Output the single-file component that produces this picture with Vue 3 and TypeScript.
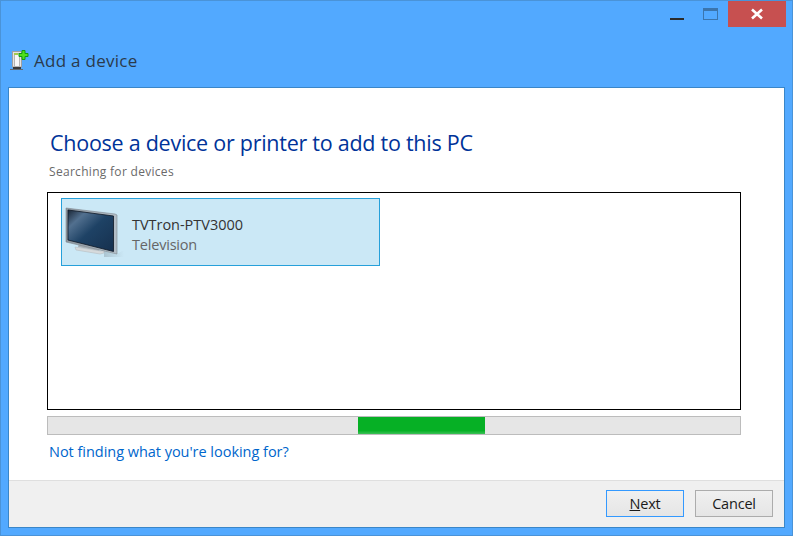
<script setup lang="ts">
const device = { name: 'TVTron-PTV3000', kind: 'Television' }
</script>

<template>
  <div class="window">
    <div class="controls">
      <div class="min-btn"><span class="min-bar"></span></div>
      <div class="max-btn"><span class="max-box"></span></div>
      <div class="close-btn">
        <svg width="14" height="12" viewBox="0 0 14 12">
          <path d="M2 1.500 L12 10.500 M12 1.500 L2 10.500" stroke="#fff" stroke-width="2.6" fill="none" />
        </svg>
      </div>
    </div>
    <div class="title-row">
      <svg class="app-icon" width="20" height="21" viewBox="0 0 20 21">
        <rect x="3.500" y="2.500" width="9" height="15.500" fill="#e4e4e4" stroke="#a0a0a0" />
        <rect x="5.500" y="4.500" width="5" height="13" fill="#f8f8f8" stroke="#b4b4b4" />
        <rect x="5" y="4" width="4" height="2" fill="#a4c850" />
        <rect x="4" y="18" width="8" height="2" fill="#3a3a3a" />
        <rect x="1" y="20" width="13" height="1" fill="#5f6a75" />
        <path d="M13 1.500 H16 V4.500 H19 V7.500 H16 V10.500 H13 V7.500 H10 V4.500 H13 Z" fill="#4fe01c" stroke="#129a10" stroke-width="1" />
      </svg>
      <span class="title">Add a device</span>
    </div>
    <main class="panel">
      <div class="content">
        <h1 class="heading">Choose a device or printer to add to this PC</h1>
        <p class="status">Searching for devices</p>
        <div class="list">
          <div class="item">
            <svg class="tv" width="68" height="56" viewBox="0 0 68 56">
              <defs>
                <linearGradient id="scr" x1="0" y1="0" x2="1" y2="1">
                  <stop offset="0" stop-color="#1a2636" />
                  <stop offset="0.22" stop-color="#52708f" />
                  <stop offset="0.5" stop-color="#1e4265" />
                  <stop offset="1" stop-color="#16304e" />
                </linearGradient>
                <linearGradient id="frm" x1="0" y1="0" x2="1" y2="0">
                  <stop offset="0" stop-color="#8b949c" />
                  <stop offset="1" stop-color="#b4bfc8" />
                </linearGradient>
                <linearGradient id="shd" x1="0" y1="0" x2="1" y2="0">
                  <stop offset="0" stop-color="#9fb6c2" stop-opacity="0.7" />
                  <stop offset="1" stop-color="#9fb6c2" stop-opacity="0" />
                </linearGradient>
              </defs>
              <path d="M40 47 L53 50 L60 46 L60 53 L40 53 Z" fill="url(#shd)" />
              <path d="M15 39 L14 43 L35 47 L36 43 Z" fill="#a9b0b5" />
              <path d="M11 43 L37 47 L40 46.500 L40 49 L36 50 L12 46 Z" fill="#d6dadc" stroke="#b0b6ba" stroke-width="0.500" />
              <path d="M2 4 L51 10 L53 11 L53 50 L51 49.500 L2 38 Z" fill="url(#frm)" stroke="#7d878f" stroke-width="0.600" />
              <path d="M4 6 L49.500 12 L49.500 47.500 L4 36 Z" fill="url(#scr)" stroke="#0e1826" stroke-width="0.800" />
            </svg>
            <div class="item-text">
              <div class="item-name">{{ device.name }}</div>
              <div class="item-kind">{{ device.kind }}</div>
            </div>
          </div>
        </div>
        <div class="progress"><div class="progress-fill"></div></div>
        <div class="link">Not finding what you're looking for?</div>
      </div>
      <footer class="footer">
        <button class="btn btn-default" type="button"><u>N</u>ext</button>
        <button class="btn" type="button">Cancel</button>
      </footer>
    </main>
  </div>
</template>

<style>
html, body { margin: 0; padding: 0; }
</style>

<style scoped>
.window {
  box-sizing: border-box;
  width: 793px;
  height: 536px;
  background: #52a9ff;
  border: 1px solid #4a93d8;
  padding: 0 7px 7px;
  display: flex;
  flex-direction: column;
  font-family: "Open Sans", "Noto Sans", sans-serif;
  overflow: hidden;
}
.controls {
  height: 26px;
  display: flex;
  justify-content: flex-end;
  margin-right: -1px;
  flex: none;
}
.min-btn { width: 14px; margin-right: 19px; display: flex; align-items: flex-end; padding-bottom: 7px; box-sizing: border-box; }
.min-bar { display: block; width: 14px; height: 2px; background: #2b2b2b; }
.max-btn { width: 15px; margin-right: 10px; padding-top: 7px; box-sizing: border-box; }
.max-box { display: block; box-sizing: border-box; width: 15px; height: 12px; border: 1px solid #3b75ad; border-top-width: 3px; background: #52a9ff; }
.close-btn { width: 58px; height: 26px; background: #c75050; display: flex; align-items: center; justify-content: center; }
.title-row {
  height: 60px;
  flex: none;
  display: flex;
  align-items: center;
  padding: 0 0 0 1px;
  box-sizing: border-box;
}
.app-icon { flex: none; margin-right: 5px; margin-top: 5px; }
.title { font-size: 17px; color: #2b3a4c; margin-top: 6px; letter-spacing: 0.28px; }
.panel {
  flex: 1;
  min-height: 0;
  background: #fff;
  border: 1px solid #3a86c8;
  display: flex;
  flex-direction: column;
}
.content {
  flex: 1;
  min-height: 0;
  padding: 40px 43px 0 38px;
}
.heading {
  margin: 0 0 0 3px;
  font-size: 21.5px;
  line-height: 30px;
  font-weight: 400;
  color: #003399;
  letter-spacing: -0.26px;
}
.status {
  margin: 5px 0 0 2px;
  font-size: 12px;
  line-height: 18px;
  color: #6a6a6a;
  letter-spacing: 0.3px;
}
.list {
  box-sizing: border-box;
  height: 218px;
  margin-top: 11px;
  border: 1px solid #000;
  padding: 5px 13px;
}
.item {
  box-sizing: border-box;
  width: 319px;
  height: 68px;
  background: #cbe8f6;
  border: 1px solid #26a0da;
  display: flex;
  align-items: center;
}
.tv { flex: none; margin-left: 2px; }
.item-text { margin-top: 5px; }
.item-name { font-size: 14.5px; line-height: 20px; color: #333; letter-spacing: -0.03px; }
.item-kind { font-size: 14.5px; line-height: 20px; color: #666; letter-spacing: -0.2px; }
.progress {
  box-sizing: border-box;
  height: 19px;
  margin-top: 6px;
  background: #e6e6e6;
  border: 1px solid #bcbcbc;
  padding-left: 310px;
}
.progress-fill {
  width: 127px;
  height: 17px;
  background: linear-gradient(#06b025 0 80%, #3cc157 100%);
}
.link {
  margin: 7px 0 0 2px;
  font-size: 14.5px;
  line-height: 20px;
  color: #0066cc;
  letter-spacing: -0.03px;
}
.footer {
  height: 47px;
  flex: none;
  box-sizing: border-box;
  background: #f0f0f0;
  border-top: 1px solid #dfdfdf;
  display: flex;
  justify-content: flex-end;
  align-items: flex-start;
  gap: 11px;
  padding: 9px 11px 0 0;
}
.btn {
  box-sizing: border-box;
  width: 78px;
  height: 27px;
  padding: 0;
  border: 1px solid #acacac;
  background: linear-gradient(#f0f0f0, #e5e5e5);
  font-family: inherit;
  font-size: 14.5px;
  letter-spacing: -0.2px;
  color: #1a1a1a;
}
.btn-default { border-color: #3399ff; }
</style>
